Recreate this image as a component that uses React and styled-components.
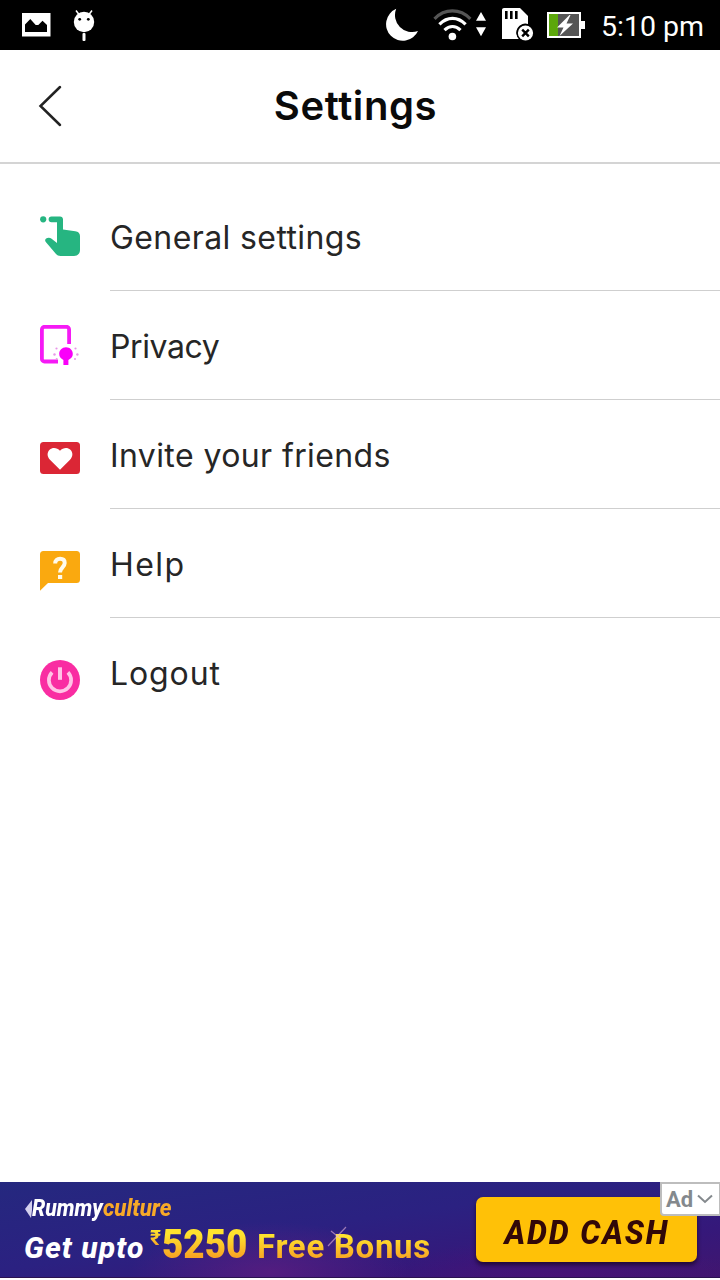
import styled, { createGlobalStyle } from "styled-components";

const GlobalStyle = createGlobalStyle`
  * {
    box-sizing: border-box;
  }

  body {
    margin: 0;
    background: #ffffff;
    font-family: Inter, "Liberation Sans", sans-serif;
  }
`;

const Screen = styled.div`
  display: flex;
  flex-direction: column;
  width: 720px;
  height: 1280px;
  overflow: hidden;
  background: #ffffff;
`;

const StatusBar = styled.div`
  display: flex;
  align-items: flex-start;
  justify-content: space-between;
  height: 50px;
  background: #000000;
`;

const StatusIcons = styled.div`
  display: flex;
  height: 50px;
`;

const Clock = styled.span`
  width: 119px;
  color: #ffffff;
  font-family: Roboto, sans-serif;
  font-size: 28.5px;
  line-height: 53px;
  white-space: nowrap;
`;

const Header = styled.header`
  display: grid;
  grid-template-columns: 100px 1fr 100px;
  align-items: center;
  height: 114px;
  border-bottom: 2px solid #d4d4d4;
`;

const BackButton = styled.button`
  width: 100px;
  height: 112px;
  padding: 0;
  border: 0;
  background: none;
`;

const Title = styled.h1`
  margin: 0 0 0 -9px;
  color: #0a0a0a;
  font-size: 40px;
  font-weight: 600;
  line-height: 112px;
  letter-spacing: 0.6px;
  text-align: center;
`;

const List = styled.ul`
  flex: 1;
  margin: 0;
  padding: 18px 0 0 40px;
  list-style: none;
`;

const Item = styled.li`
  display: flex;
  gap: 30px;
  height: 109px;
`;

const ItemIcon = styled.svg`
  flex: none;
  width: 40px;
  height: 40px;
  margin-top: ${(props) => props.$top}px;
`;

const ItemLabel = styled.div`
  flex: 1;
  border-bottom: 1px solid ${(props) => (props.$last ? "transparent" : "#cfcfcf")};
  color: #262626;
  font-size: 32px;
  font-weight: 400;
  line-height: 111px;
  letter-spacing: ${(props) => props.$tracking}px;
`;

const Banner = styled.footer`
  position: relative;
  display: flex;
  justify-content: space-between;
  height: 96px;
  margin-bottom: 2px;
  padding: 15px 23px 0 24px;
  border-bottom: 1px solid #2a1250;
  background:
    radial-gradient(ellipse 140px 50px at 270px 90px, rgba(110, 30, 130, 0.55), transparent),
    radial-gradient(ellipse 180px 40px at 560px 96px, rgba(80, 15, 120, 0.6), transparent),
    linear-gradient(172deg, #25287f 0%, #2b2181 45%, #35187a 75%, #40166f 100%);
  font-family: Roboto, sans-serif;
`;

const Brand = styled.div`
  display: flex;
  align-items: center;
  height: 23px;
`;

const Offer = styled.div`
  display: flex;
  align-items: baseline;
  height: 48px;
  padding-top: 1px;
`;

const Word = styled.span`
  width: ${(props) => props.$width}px;
  color: ${(props) => props.$color ?? "#ffffff"};
  font-size: ${(props) => props.$size}px;
  font-style: ${(props) => (props.$italic ? "italic" : "normal")};
  font-weight: ${(props) => props.$weight ?? 700};
  line-height: ${(props) => props.$line ?? 48}px;
  letter-spacing: ${(props) => props.$tracking ?? 0}px;
  white-space: nowrap;
  transform: scaleX(${(props) => props.$stretch ?? 1});
  transform-origin: left;
`;

const GoldWord = styled(Word)`
  background: linear-gradient(#ffe32e 28%, #f79a22 82%);
  background-clip: text;
  color: transparent;
`;

const Rupee = styled(GoldWord)`
  align-self: flex-start;
`;

const Sparkle = styled.svg`
  position: absolute;
  top: 42px;
  left: 326px;
`;

const CashButton = styled.button`
  width: 221px;
  height: 65px;
  padding: 6px 0 0;
  border: 0;
  border-radius: 7px;
  background: #ffc107;
  box-shadow: 0 3px 4px rgba(25, 5, 40, 0.8);
  color: #320808;
  font-family: Roboto, sans-serif;
  font-size: 33px;
  font-style: italic;
  font-weight: 800;
  letter-spacing: 1.9px;
  white-space: nowrap;
`;

const CashLabel = styled.span`
  display: inline-block;
  transform: scaleX(0.96);
`;

const AdBadge = styled.div`
  position: absolute;
  top: 0;
  right: 0;
  display: flex;
  align-items: center;
  gap: 4px;
  width: 60px;
  height: 34px;
  padding-left: 4px;
  border: 2px solid #bdbdbd;
  border-right-width: 1px;
  border-bottom-left-radius: 4px;
  background: #ffffff;
  color: #84898d;
  font-family: Roboto, sans-serif;
  font-size: 22px;
  font-weight: 700;
`;

const TouchIcon = () => (
  <g fill="#26b581">
    <circle cx="3.2" cy="3.3" r="3.1" />
    <path d="M11.5.4H20c1.8 0 3 1.2 3 3v10.2l12.3 1.6c3 .4 4.7 2 4.7 4.7V34c0 3.6-2.4 6-6 6H20.5c-2 0-3.4-.7-4.5-2L5.8 26c-1-1.2-.8-2.5.3-3.4 1.7-1.2 4-1 5.5.2L17 27V6.2h-5.5a2.9 2.9 0 0 1 0-5.8z" />
  </g>
);

const PrivacyIcon = () => (
  <>
    <path d="M18 36.5H4.5a2.6 2.6 0 0 1-2.6-2.6V4.4a2.6 2.6 0 0 1 2.6-2.6h22a2.6 2.6 0 0 1 2.6 2.6V19" fill="none" stroke="#f51af5" strokeWidth="3.8" />
    <path d="M26 22.3c-4 0-6.8 3-6.8 6.6 0 2.7 1.6 4.6 4.2 6V40h5v-5.1c2.7-1.4 4.4-3.3 4.4-6 0-3.7-2.9-6.6-6.8-6.6z" fill="#f900f9" />
    <g fill="#e895e8">
      <circle cx="16.5" cy="23.5" r="1.1" />
      <circle cx="14.5" cy="29.5" r="1.2" />
      <circle cx="16.7" cy="34" r="1" />
      <circle cx="35.5" cy="23.5" r="1.1" />
      <circle cx="37.4" cy="29.5" r="1.2" />
      <circle cx="35" cy="34" r="1" />
    </g>
  </>
);

const InviteIcon = () => (
  <>
    <rect width="40" height="32" rx="3.5" fill="#db2635" />
    <path d="M20 27.8 10.2 18C6.8 14.5 6.9 10.2 9.6 7.7c3-2.7 7.6-2.1 10.4 1.1 2.8-3.2 7.4-3.8 10.4-1.1 2.7 2.5 2.8 6.8-.6 10.3z" fill="#fff" />
  </>
);

const HelpIcon = () => (
  <>
    <path d="M3.5 0h33A3.5 3.5 0 0 1 40 3.5v25a3.5 3.5 0 0 1-3.5 3.5H8l-8 7.8V3.5A3.5 3.5 0 0 1 3.5 0z" fill="#faa90f" />
    <path d="M15.2 12.4c0-3 2-4.7 4.9-4.7s4.6 1.7 4.6 4.4c0 4.1-4.7 4.6-4.7 9.4" fill="none" stroke="#fffbed" strokeWidth="4" />
    <rect x="18" y="24" width="4.2" height="4" fill="#fffbed" />
  </>
);

const LogoutIcon = () => (
  <>
    <circle cx="20" cy="20" r="20" fill="#f92da2" />
    <path d="M20 7.3v12.5" stroke="#ffc4e6" strokeWidth="4" />
    <path d="M12.1 12.4a11.1 11.1 0 1 0 15.8 0" fill="none" stroke="#ffc4e6" strokeWidth="3.7" />
  </>
);

const items = [
  { label: "General settings", Icon: TouchIcon, top: 34, tracking: 0.4 },
  { label: "Privacy", Icon: PrivacyIcon, top: 34, tracking: -0.4 },
  { label: "Invite your friends", Icon: InviteIcon, top: 42, tracking: 0.4 },
  { label: "Help", Icon: HelpIcon, top: 42, tracking: 1.4 },
  { label: "Logout", Icon: LogoutIcon, top: 42, tracking: 0.9 },
];

const App = () => {
  return (
    <Screen>
      <GlobalStyle />
      <StatusBar>
        <StatusIcons>
          <svg width="110" height="50" viewBox="0 0 110 50" fill="#fff">
            <path fillRule="evenodd" d="M22 13h28.5v23.5H22zM25 32h22v-7l-4.5-4.3-4.2 4.3h-2.6l-5.4-6L25 24.5z" />
            <circle cx="84" cy="22" r="10.2" />
            <path d="m76 10.5 3 4M92 10.5l-3 4" stroke="#fff" strokeWidth="1.5" />
            <circle cx="79.7" cy="19.3" r="1.4" fill="#000" />
            <circle cx="88.3" cy="19.3" r="1.4" fill="#000" />
            <rect x="82.5" y="33" width="3" height="8" rx="1" />
          </svg>
        </StatusIcons>
        <StatusIcons>
          <svg width="221" height="50" viewBox="380 0 221 50" fill="#fff">
            <path d="M396.2 8.8A16.7 16.7 0 1 0 418 31 17 17 0 0 1 396.2 8.8z" />
            <g fill="none" strokeWidth="3.2">
              <path d="M434.5 18.8c10.2-10.5 25.6-10.5 35.8 0" stroke="#555" />
              <path d="M439.4 24.3c8-8 18.2-8 26.2 0M444.5 30.2c4.9-4.7 11.1-4.7 16 0" stroke="#fff" />
            </g>
            <circle cx="452.4" cy="36.5" r="3.8" />
            <path d="m481 12 5 8.7h-10zM476 27.3h10l-5 9z" />
            <path d="M504 8h16l8 8v8a9 9 0 0 0-9 15h-17V10c0-1.1.9-2 2-2z" />
            <path d="M506.3 11v8M511.3 11v8M516.3 11v8" stroke="#000" strokeWidth="2.6" />
            <circle cx="525.5" cy="33" r="9" fill="#000" />
            <circle cx="525.5" cy="33" r="7.6" />
            <path d="m522.2 29.7 6.6 6.6M528.8 29.7l-6.6 6.6" stroke="#000" strokeWidth="2.4" />
            <rect x="548" y="13" width="32" height="24" fill="#555" stroke="#fff" strokeWidth="2" />
            <rect x="549" y="14" width="9" height="22" fill="#5ca70b" />
            <rect x="581" y="21" width="4" height="8" />
            <path d="m569.5 15-12.5 12.5h6.5L559.5 36 573 23.5h-6.5l4-8.5z" />
          </svg>
          <Clock>5:10 pm</Clock>
        </StatusIcons>
      </StatusBar>

      <Header>
        <BackButton aria-label="Back">
          <svg width="100" height="112" viewBox="0 0 100 112" fill="none" stroke="#222" strokeWidth="2.5" strokeLinecap="round">
            <path d="M60 37 40.5 56 60 75" />
          </svg>
        </BackButton>
        <Title>Settings</Title>
      </Header>

      <List>
        {items.map(({ label, Icon, top, tracking }, i) => (
          <Item key={label}>
            <ItemIcon viewBox="0 0 40 40" $top={top}>
              <Icon />
            </ItemIcon>
            <ItemLabel $tracking={tracking} $last={i === items.length - 1}>
              {label}
            </ItemLabel>
          </Item>
        ))}
      </List>

      <Banner>
        <div>
          <Brand>
            <svg width="8" height="22" viewBox="0 0 8 22">
              <path d="M8 2 1 11l6 9 1-8z" fill="#d4d0ee" />
            </svg>
            <Word $width={71} $size={23} $line={24} $stretch={0.92} $weight={800} $italic>Rummy</Word>
            <Word $width={70} $size={23} $line={24} $stretch={0.97} $weight={800} $color="#f7a928" $italic>culture</Word>
          </Brand>
          <Offer>
            <Word $width={126} $size={30} $tracking={1.1} $weight={800} $italic>Get upto</Word>
            <Rupee $width={12} $size={21} $line={34}>₹</Rupee>
            <GoldWord $width={95} $size={40} $weight={900} $stretch={0.92}>5250</GoldWord>
            <GoldWord $width={180} $size={33} $tracking={0.7}>Free Bonus</GoldWord>
          </Offer>
        </div>
        <Sparkle width="24" height="24" viewBox="0 0 24 24" stroke="#e7b4d8" strokeWidth="1.2" opacity="0.6">
          <path d="M2 22 20 3M5 7l10 8" />
        </Sparkle>
        <CashButton>
          <CashLabel>ADD CASH</CashLabel>
        </CashButton>
        <AdBadge>
          Ad
          <svg width="16" height="10" viewBox="0 0 16 10" fill="none" stroke="#84898d" strokeWidth="2">
            <path d="m1 1.5 7 6.5 7-6.5" />
          </svg>
        </AdBadge>
      </Banner>
    </Screen>
  );
};

export default App;
